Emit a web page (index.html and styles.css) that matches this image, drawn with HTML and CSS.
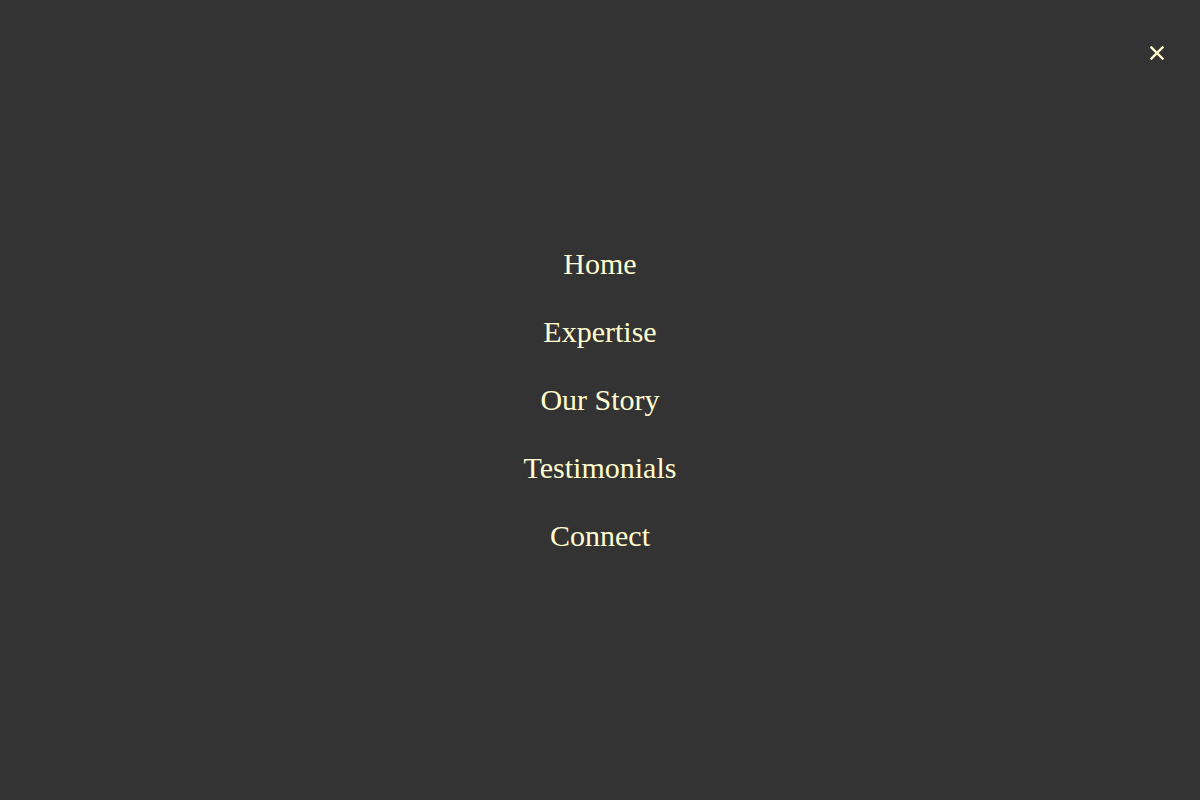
FILE: index.html
```html
<!DOCTYPE html>
<html lang="en">
<head>
<meta charset="utf-8">
<title>Menu</title>
<link rel="stylesheet" href="styles.css">
</head>
<body>
<div class="overlay">
  <button class="close" aria-label="Close menu">
    <svg width="14" height="14" viewBox="0 0 14 14"><path d="M1.5 1.5L12.5 12.5M12.5 1.5L1.5 12.5" stroke="#fffdd0" stroke-width="2.4" stroke-linecap="square"/></svg>
  </button>
  <nav class="menu">
    <a href="#">Home</a>
    <a href="#">Expertise</a>
    <a href="#">Our Story</a>
    <a href="#">Testimonials</a>
    <a href="#">Connect</a>
  </nav>
</div>
</body>
</html>
```
FILE: styles.css
```css
html, body {
  margin: 0;
  padding: 0;
  height: 100%;
}
body {
  background: #333333;
  font-family: "Liberation Serif", "Times New Roman", serif;
}
.overlay {
  height: 100vh;
  display: flex;
  align-items: center;
  justify-content: center;
  position: relative;
}
.close {
  position: absolute;
  top: 46px;
  right: 36px;
  background: none;
  border: 0;
  padding: 0;
  width: 14px;
  height: 14px;
  cursor: pointer;
  display: flex;
}
.menu {
  display: flex;
  flex-direction: column;
  align-items: center;
  gap: 34px;
}
.menu a {
  color: #fffdd0;
  text-decoration: none;
  font-size: 30px;
  line-height: 34px;
}
```
